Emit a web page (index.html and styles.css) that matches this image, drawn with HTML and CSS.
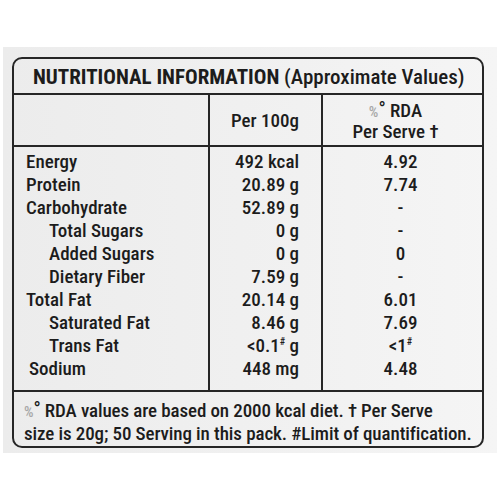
FILE: index.html
```html
<!DOCTYPE html>
<html>
<head>
<meta charset="utf-8">
<link rel="stylesheet" href="styles.css">
</head>
<body>
<div class="panel">
  <div class="box">
    <div class="title"><span class="caps">NUTRITIONAL INFORMATION</span> (Approximate Values)</div>
    <div class="grid">
      <div class="cell head c1"></div>
      <div class="cell head c2">Per 100g</div>
      <div class="cell head c3"><div><span class="pct">%</span><span class="deg">°</span> RDA</div><div>Per Serve †</div></div>
      <div class="cell body c1">
        <div class="row">Energy</div>
        <div class="row">Protein</div>
        <div class="row">Carbohydrate</div>
        <div class="row sub">Total Sugars</div>
        <div class="row sub">Added Sugars</div>
        <div class="row sub">Dietary Fiber</div>
        <div class="row">Total Fat</div>
        <div class="row sub">Saturated Fat</div>
        <div class="row sub">Trans Fat</div>
        <div class="row sod">Sodium</div>
      </div>
      <div class="cell body c2 num">
        <div class="row">492 kcal</div>
        <div class="row">20.89 g</div>
        <div class="row">52.89 g</div>
        <div class="row">0 g</div>
        <div class="row">0 g</div>
        <div class="row">7.59 g</div>
        <div class="row">20.14 g</div>
        <div class="row">8.46 g</div>
        <div class="row">&lt;0.1<sup>#</sup> g</div>
        <div class="row">448 mg</div>
      </div>
      <div class="cell body c3 rda">
        <div class="row">4.92</div>
        <div class="row">7.74</div>
        <div class="row">-</div>
        <div class="row">-</div>
        <div class="row">0</div>
        <div class="row">-</div>
        <div class="row">6.01</div>
        <div class="row">7.69</div>
        <div class="row">&lt;1<sup>#</sup></div>
        <div class="row">4.48</div>
      </div>
    </div>
    <div class="foot"><span class="pct">%</span><span class="deg">°</span> RDA values are based on 2000 kcal diet. † Per Serve<br>size is 20g; 50 Serving in this pack. #Limit of quantification.</div>
  </div>
</div>
</body>
</html>
```
FILE: styles.css
```css
html, body {
  margin: 0;
  padding: 0;
  background: #ffffff;
}
body {
  font-family: "Roboto Condensed", "Liberation Sans Narrow", Roboto, sans-serif;
  font-weight: 500;
  color: #1c1c1c;
}
.panel {
  margin: 47px 0 0 3px;
  width: 494px;
  height: 406px;
  background: linear-gradient(90deg, #ececec 0%, #f1f1f1 60%, #f5f5f5 100%);
  padding: 10px 0 0 9px;
  box-sizing: border-box;
}
.box {
  width: 472px;
  height: 391px;
  border: 2px solid #262626;
  border-radius: 10px;
  box-sizing: border-box;
  display: flex;
  flex-direction: column;
}
.title {
  height: 36px;
  box-sizing: border-box;
  border-bottom: 2px solid #262626;
  padding: 4px 0 0 19px;
  font-size: 21px;
  line-height: 28px;
  white-space: nowrap;
}
.title .caps {
  font-weight: 700;
}
.grid {
  display: grid;
  grid-template-columns: 196px 113px 1fr;
  grid-template-rows: 52px 243px;
}
.cell.head {
  border-bottom: 2px solid #262626;
}
.c1, .c2 {
  border-right: 2px solid #262626;
}
.head.c2 {
  display: flex;
  align-items: center;
  justify-content: flex-end;
  padding-right: 22px;
  font-size: 19px;
}
.head.c3 {
  display: flex;
  flex-direction: column;
  align-items: center;
  justify-content: center;
  font-size: 19px;
  line-height: 19px;
  padding-right: 14px;
}
.pct {
  color: #a8a8a8;
  font-size: 15px;
}
.deg {
  font-size: 19px;
  vertical-align: 2px;
}
.cell.body {
  padding-top: 3px;
  font-size: 19px;
}
.row {
  height: 23px;
  line-height: 23px;
  white-space: nowrap;
}
.c1 .row {
  padding-left: 12px;
}
.c1 .row.sub {
  padding-left: 35px;
}
.c1 .row.sod {
  padding-left: 15px;
}
.num {
  text-align: right;
  padding-right: 22px;
}
.rda {
  text-align: center;
  padding-right: 4px;
}
sup {
  font-size: 10px;
  vertical-align: 7px;
  line-height: 0;
}
.foot {
  border-top: 2px solid #262626;
  padding: 6px 0 0 10px;
  font-size: 19px;
  line-height: 22px;
  letter-spacing: -0.1px;
  white-space: nowrap;
}
```
